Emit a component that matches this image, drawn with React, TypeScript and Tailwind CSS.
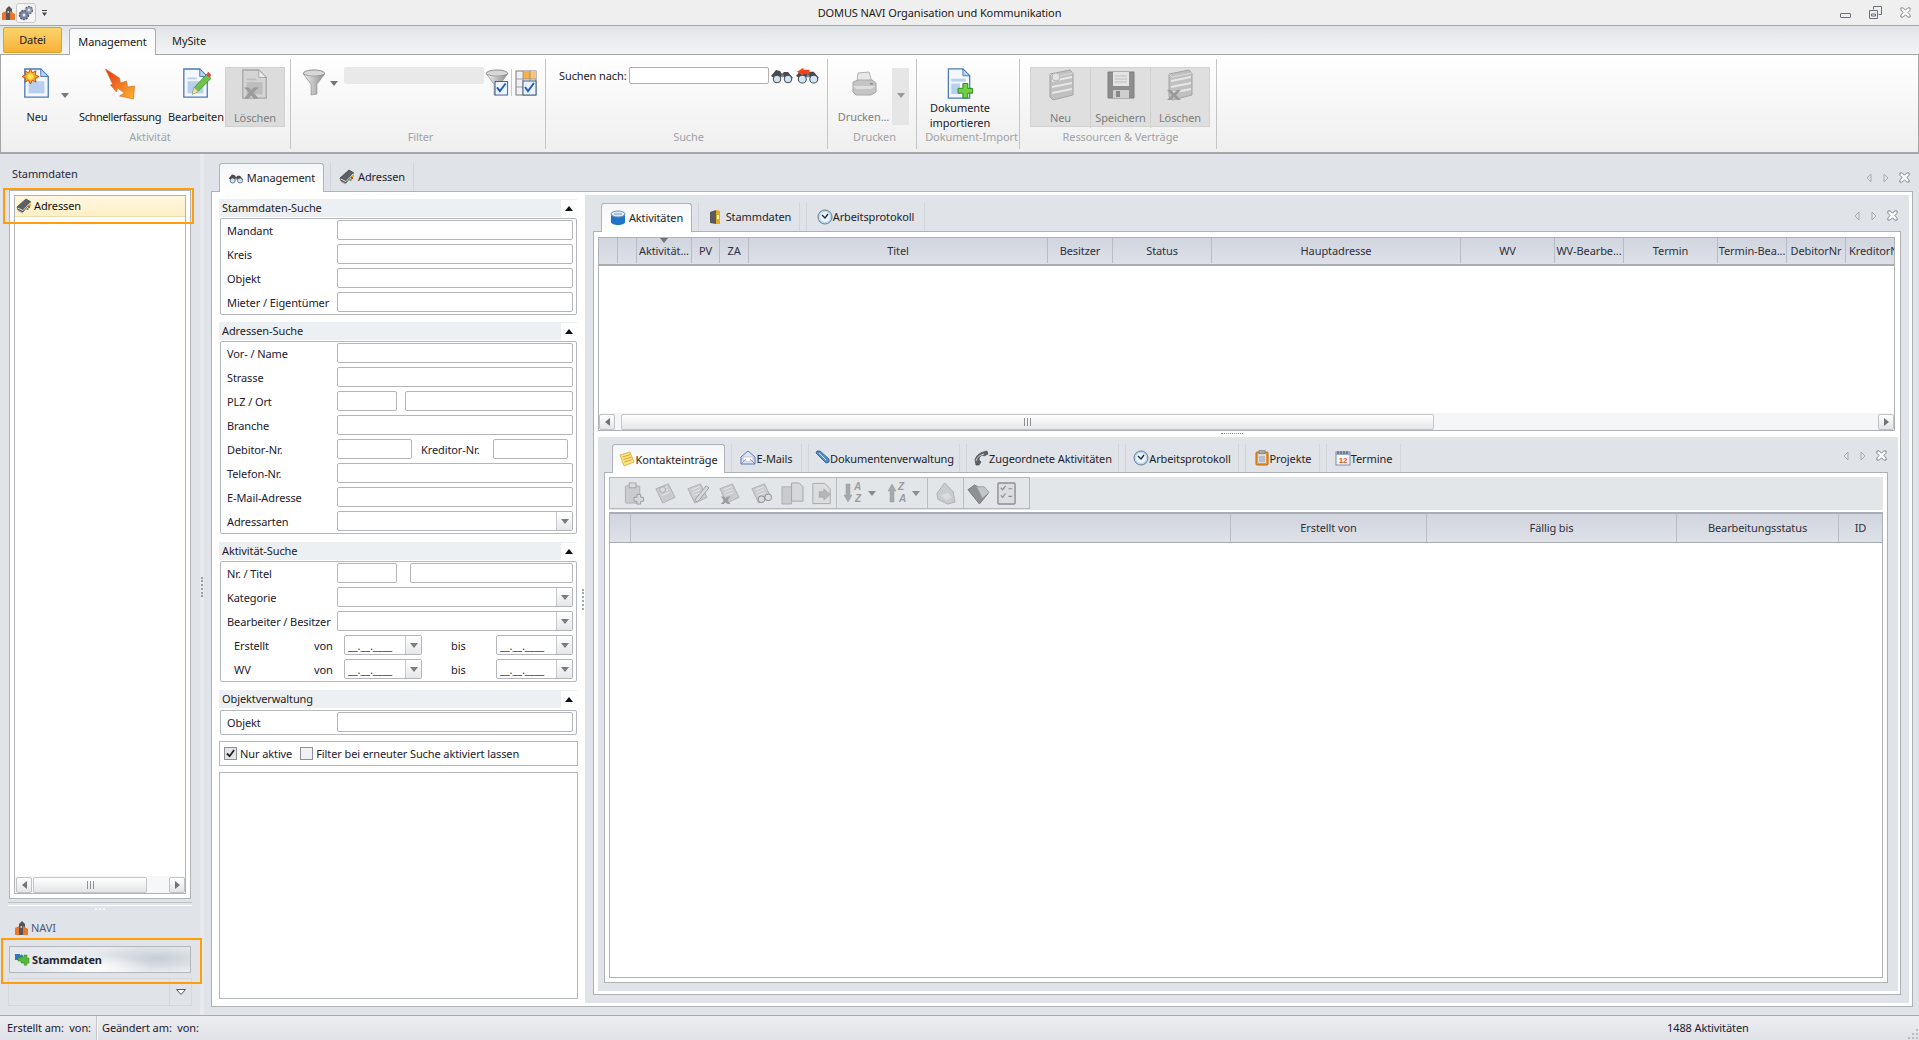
import type { ReactNode } from "react";

const line = "border-[#b4b7bc]";

type IconProps = { className?: string };

const Tri = ({ className = "" }: IconProps) => (
  <svg viewBox="0 0 8 5" className={`w-[8px] h-[5px] ${className}`}>
    <path d="M0 0h8L4 5z" fill="currentColor" />
  </svg>
);

/* ---- large ribbon icons ---- */
const DocBase = ({ gray = false }: { gray?: boolean }) => (
  <>
    <path d="M3 1h17l8 8v22H3z" fill={gray ? "#d4d4d4" : "#f4f8fd"} stroke={gray ? "#a8a8a8" : "#4a7ab8"} strokeWidth="1.4" />
    <path d="M20 1v8h8z" fill={gray ? "#ececec" : "#bcd4f0"} stroke={gray ? "#a8a8a8" : "#4a7ab8"} />
    <rect x="7" y="14" width="17" height="13" fill={gray ? "#bdbdbd" : "#b9cfee"} />
    <rect x="7" y="10" width="10" height="2" fill={gray ? "#bdbdbd" : "#b9cfee"} />
  </>
);

const NewDoc = () => (
  <svg viewBox="0 0 32 34" className="w-[30px] h-[32px]">
    <DocBase />
    <path d="M9 1l2 4 4-2-1 4 4 2-4 2 1 4-4-2-2 4-2-4-4 2 1-4-4-2 4-2-1-4 4 2z" fill="#f0b020" stroke="#d8401a" strokeWidth="1" />
    <circle cx="9" cy="9" r="3.2" fill="#ffe14d" />
  </svg>
);

const Lightning = () => (
  <svg viewBox="0 0 34 34" className="w-[35px] h-[34px]">
    <defs>
      <linearGradient id="bolt" x1="0" y1="0" x2="1" y2="1">
        <stop offset="0" stopColor="#e5341a" />
        <stop offset="1" stopColor="#ffb52e" />
      </linearGradient>
    </defs>
    <path d="M2 2l14 9 1 5 6-2 1 6 7-1-1 13-14-3 5-3-7-5-1 4-6-7 2-1z" fill="url(#bolt)" stroke="#c9661a" strokeWidth=".6" />
  </svg>
);

const EditDoc = () => (
  <svg viewBox="0 0 32 34" className="w-[30px] h-[32px]">
    <DocBase />
    <path d="M12 28l2-7 13-14 5 4-14 14z" fill="#6fc24a" stroke="#3d8a2a" strokeWidth=".8" />
    <path d="M27 7l2-3 3 3-1 3z" fill="#e2483a" />
    <path d="M12 28l2-7 4 4z" fill="#f7dca8" />
  </svg>
);

const DeleteDoc = () => (
  <svg viewBox="0 0 32 34" className="w-[30px] h-[32px]">
    <DocBase gray />
    <path d="M5 20l4 0 3 3 3-3 4 0-5 5 5 6-4 0-3-3-3 3-4 0 5-6z" fill="#9c9c9c" stroke="#8a8a8a" strokeWidth=".5" />
  </svg>
);

const Funnel = ({ check = false }: { check?: boolean }) => (
  <svg viewBox="0 0 24 28" className="w-[24px] h-[27px]">
    <defs>
      <linearGradient id="fun" x1="0" x2="1" y1="0" y2="0">
        <stop offset="0" stopColor="#f2f2f2" />
        <stop offset="1" stopColor="#8c8c8c" />
      </linearGradient>
    </defs>
    <ellipse cx="12" cy="4.5" rx="11" ry="3.5" fill="#d8d8d8" stroke="#8a8a8a" />
    <path d="M1 5l8 11v11l6-1V16l8-11c-3 3-19 3-22 0z" fill="url(#fun)" stroke="#8a8a8a" strokeWidth=".7" />
    {check && (
      <>
        <rect x="10" y="13" width="13" height="14" fill="#eef3fb" stroke="#3c5f95" />
        <path d="M12 19l3 4 6-8" fill="none" stroke="#1f5fb8" strokeWidth="2" />
      </>
    )}
  </svg>
);

const GridCheck = () => (
  <svg viewBox="0 0 22 26" className="w-[22px] h-[26px]">
    <rect x="1" y="1" width="20" height="24" fill="#f1f1f1" stroke="#7a7a7a" />
    <rect x="8" y="1" width="7" height="8" fill="#f6b24a" />
    <rect x="15" y="1" width="6" height="8" fill="#f6c77a" />
    <path d="M1 9h20M1 17h20M8 1v24M15 1v24" stroke="#8a8a8a" strokeWidth=".8" />
    <rect x="8" y="11" width="13" height="14" fill="#eef3fb" stroke="#3c5f95" />
    <path d="M10 17l3 4 6-8" fill="none" stroke="#1f5fb8" strokeWidth="2" />
  </svg>
);

const Binoculars = ({ arrow = false, className = "w-[24px] h-[16px]" }: { arrow?: boolean; className?: string }) => (
  <svg viewBox="0 0 24 16" className={className}>
    <path d="M1 8l5-6 4 1 2 3 2-2 4 0 5 6-6 2-3-3h-4l-3 3z" fill="#4a4a4c" />
    <circle cx="7" cy="11" r="3.800" fill="#cfe6fa" stroke="#44464a" strokeWidth="1" />
    <circle cx="18" cy="11" r="3.800" fill="#cfe6fa" stroke="#44464a" strokeWidth="1" />
    <circle cx="12.500" cy="8" r="1.400" fill="#8a8c90" />
    {arrow && <path d="M2 4l6-4v2h6v4H8v2z" fill="#f0451c" />}
  </svg>
);

const Printer = () => (
  <svg viewBox="0 0 26 26" className="w-[26px] h-[26px]">
    <path d="M7 2l11-1 3 10H6z" fill="#e8e8e8" stroke="#b0b0b0" />
    <path d="M2 11l5-2h14l4 3v9l-5 3H5l-3-3z" fill="#c4c4c4" stroke="#a8a8a8" />
    <path d="M2 15h23l-5 3H5z" fill="#dedede" />
    <rect x="19" y="12" width="3" height="1.5" fill="#8c8c8c" />
  </svg>
);

const ImportDoc = () => (
  <svg viewBox="0 0 28 32" className="w-[28px] h-[31px]">
    <path d="M2 1h15l7 7v23H2z" fill="#f4f8fd" stroke="#4a7ab8" strokeWidth="1.3" />
    <path d="M17 1v7h7z" fill="#bcd4f0" stroke="#4a7ab8" />
    <rect x="5" y="11" width="15" height="3" fill="#b9cfee" />
    <rect x="5" y="16" width="9" height="11" fill="#b9cfee" />
    <path d="M17 16h5v5h5v5h-5v5h-5v-5h-5v-5h5z" fill="#6fd243" stroke="#2f8a1c" />
  </svg>
);

const ServerBase = () => (
  <>
    <path d="M3 5l20-4 3 3v22l-20 5-3-3z" fill="#c0c0c0" stroke="#a4a4a4" />
    <path d="M5 12l20-4M5 18l20-4M5 24l20-4" stroke="#e8e8e8" strokeWidth="2" />
    <path d="M3 5l3 3 20-4" fill="none" stroke="#dadada" />
  </>
);

const ServerNew = () => (
  <svg viewBox="0 0 28 32" className="w-[28px] h-[32px]">
    <ServerBase />
    <circle cx="9" cy="8" r="4" fill="#e2e2e2" stroke="#b8b8b8" />
  </svg>
);

const ServerDel = () => (
  <svg viewBox="0 0 28 32" className="w-[28px] h-[32px]">
    <ServerBase />
    <path d="M1 21h4l3 3 3-3h4l-5 5 5 5h-4l-3-3-3 3H1l5-5z" fill="#9a9a9a" />
  </svg>
);

const Floppy = () => (
  <svg viewBox="0 0 28 30" className="w-[28px] h-[30px]">
    <path d="M1 2h26v26H1z" fill="#8e8e8e" stroke="#7d7d7d" />
    <rect x="6" y="2" width="16" height="14" fill="#e4e4e4" />
    <path d="M8 6h12M8 9h12M8 12h12" stroke="#bdbdbd" />
    <rect x="6" y="20" width="16" height="8" fill="#cfcfcf" />
    <rect x="9" y="21" width="4" height="6" fill="#888" />
  </svg>
);

/* ---- small tab icons ---- */
const BookIcon = ({ className = "w-[16px] h-[16px]" }: IconProps) => (
  <svg viewBox="0 0 16 16" className={className}>
    <path d="M1 9l9-8 5 3-8 10-5-2z" fill="#5d5f63" stroke="#36383c" strokeWidth=".7" />
    <path d="M1.500 10l5.500 2.500 7.500-8" fill="none" stroke="#e0e0e0" strokeWidth="1" />
    <path d="M2 12.500l5 2.500" stroke="#9a9a9a" />
    <rect x="13" y="6" width="2" height="2" fill="#e2b21f" />
    <rect x="12" y="8" width="2" height="2" fill="#d84a2a" />
    <rect x="10.500" y="10" width="2" height="2" fill="#4aa83a" />
  </svg>
);

const DbIcon = () => (
  <svg viewBox="0 0 16 16" className="w-[16px] h-[16px]">
    <path d="M1 4v8c0 4 14 4 14 0V4z" fill="#1f73c8" />
    <ellipse cx="8" cy="4" rx="7" ry="3" fill="#dfe9f4" stroke="#6f93bb" />
    <path d="M4 4h8" stroke="#9cb6d2" strokeWidth="1.5" />
  </svg>
);

const BinderIcon = () => (
  <svg viewBox="0 0 16 16" className="w-[16px] h-[16px]">
    <path d="M3 3l6-2v14l-6-1z" fill="#5a5a5a" />
    <path d="M9 1l4 1v13l-4 0z" fill="#e6a91e" />
    <rect x="10" y="6" width="2" height="4" fill="#fff3c2" />
  </svg>
);

const ClockIcon = () => (
  <svg viewBox="0 0 16 16" className="w-[16px] h-[16px]">
    <circle cx="8" cy="8" r="7" fill="#bcd9f2" stroke="#6c7f92" />
    <circle cx="8" cy="8" r="5" fill="#edf5fc" />
    <path d="M5 6l3 3 3-4" fill="none" stroke="#1a2a4a" strokeWidth="1.3" />
  </svg>
);

const NoteIcon = () => (
  <svg viewBox="0 0 16 16" className="w-[16px] h-[16px]">
    <path d="M1 4l10-3 4 10-10 4z" fill="#fbe27a" stroke="#c9a83a" strokeWidth=".7" />
    <path d="M3.500 6l8-2.500M4.500 8.500l8-2.500M5.500 11l7-2.300" stroke="#bb9a2e" strokeWidth=".7" />
  </svg>
);

const MailIcon = () => (
  <svg viewBox="0 0 16 16" className="w-[16px] h-[16px]">
    <path d="M1 7l7-6 7 6v7H1z" fill="#dbe6f6" stroke="#5c78a8" />
    <path d="M3 7h10v3l-5 2-5-2z" fill="#fff" stroke="#c89aa8" strokeWidth=".6" />
    <path d="M1 14l5-5M15 14l-5-5" stroke="#5c78a8" strokeWidth=".7" />
  </svg>
);

const ClipIcon = () => (
  <svg viewBox="0 0 16 16" className="w-[16px] h-[16px]">
    <path d="M2 3l10 10 3-1 0-3L6 1 3 1z" fill="#4f8ed0" stroke="#24548f" strokeWidth=".8" />
    <path d="M5 3l7 7" stroke="#cfe2f6" strokeWidth="1" />
  </svg>
);

const PhoneIcon = () => (
  <svg viewBox="0 0 16 16" className="w-[16px] h-[16px]">
    <path d="M2 10C3 5 8 2 14 1l1 3-4 2-2-1c-2 1-3 3-3 5l2 2-2 3H3z" fill="#5f6266" stroke="#3a3c40" strokeWidth=".6" />
    <path d="M3 11c1-4 4-6 8-7" fill="none" stroke="#d0d0d0" />
  </svg>
);

const ClipboardIcon = () => (
  <svg viewBox="0 0 16 16" className="w-[16px] h-[16px]">
    <rect x="2" y="2" width="12" height="13" rx="1" fill="#f0962a" stroke="#b8661a" />
    <rect x="4" y="4" width="8" height="9" fill="#d8dde6" />
    <rect x="5" y="0.500" width="6" height="3" fill="#a8a8a8" stroke="#6f6f6f" strokeWidth=".5" />
    <path d="M5 7h6M5 9h6M5 11h6" stroke="#7c8592" strokeWidth=".7" />
  </svg>
);

const CalendarIcon = () => (
  <svg viewBox="0 0 16 16" className="w-[16px] h-[16px]">
    <rect x="1" y="2" width="14" height="13" fill="#f7f7f7" stroke="#7c8aa8" />
    <rect x="1" y="2" width="14" height="3" fill="#9aa6c2" />
    <path d="M3 1v3M6 1v3M9 1v3M12 1v3" stroke="#555" />
    <text x="8" y="13" textAnchor="middle" fontSize="8" fontWeight="700" fill="#e8541c" fontFamily="Liberation Sans, sans-serif">12</text>
  </svg>
);

const NaviIcon = ({ className = "w-[16px] h-[16px]" }: IconProps) => (
  <svg viewBox="0 0 16 16" className={className}>
    <path d="M5 15V4l3-3 3 3v11z" fill="#55555a" />
    <path d="M1 15V8l4-2v9z" fill="#e9762a" />
    <path d="M9 15V6l5 3v6z" fill="#e9762a" />
    <rect x="6.500" y="6" width="1.500" height="2" fill="#c8c8c8" />
  </svg>
);

const PuzzleIcon = () => (
  <svg viewBox="0 0 16 16" className="w-[16px] h-[16px]">
    <path d="M1 2h5v2a1.500 1.500 0 013 0v1H6v3H1z" fill="#2f78c4" />
    <path d="M6 5h4V3h3v3h2v5h-2v1a1.500 1.500 0 01-3 0v-1H7V9H4V6h2z" fill="#55b83a" stroke="#2f8a1c" strokeWidth=".5" />
  </svg>
);

const GearsIcon = () => (
  <svg viewBox="0 0 16 16" className="w-[16px] h-[16px]">
    <circle cx="6" cy="10" r="4.500" fill="#7d84a0" stroke="#50566e" strokeDasharray="2 1" strokeWidth="1.500" />
    <circle cx="11" cy="5" r="3.500" fill="#9aa0ba" stroke="#60667e" strokeDasharray="2 1" strokeWidth="1.300" />
    <circle cx="6" cy="10" r="1.500" fill="#e8e8ee" />
    <circle cx="11" cy="5" r="1.200" fill="#e8e8ee" />
  </svg>
);

const CloseX = ({ className = "text-[#7a7f88]" }: IconProps) => (
  <svg viewBox="0 0 12 12" className={`w-[11px] h-[11px] ${className}`}>
    <path d="M1 1h2.500L6 3.500 8.500 1H11v2.500L8.500 6 11 8.500V11H8.500L6 8.500 3.500 11H1V8.500L3.500 6 1 3.500z" fill="#fff" stroke="currentColor" strokeWidth="1" />
  </svg>
);

const NavArrows = ({ className }: IconProps) => (
  <div className={`flex items-center gap-[8px] ${className}`}>
    <svg viewBox="0 0 6 10" className="w-[6px] h-[10px] mr-[3px]"><path d="M5 1L1 5l4 4z" fill="none" stroke="#a8adb5" /></svg>
    <svg viewBox="0 0 6 10" className="w-[6px] h-[10px] mr-[2px]"><path d="M1 1l4 4-4 4z" fill="none" stroke="#a8adb5" /></svg>
    <CloseX />
  </div>
);

/* ---- gray toolbar icons ---- */
const g = { fill: "#c9cbce", stroke: "#a4a6aa", strokeWidth: 0.8 };

const GrayPage = ({ children }: { children?: ReactNode }) => (
  <svg viewBox="0 0 24 24" className="w-[23px] h-[23px] shrink-0">
    <path d="M2 7l13-5 7 14-13 6z" {...g} />
    <path d="M6 8l8-3M7 11l8-3M8 14l8-3" stroke="#e6e7e9" />
    {children}
  </svg>
);

const ToolbarIcons = () => (
  <div className="flex items-center h-full pl-[13px]">
    <svg viewBox="0 0 22 24" className="w-[22px] h-[23px] shrink-0">
      <rect x="2" y="4" width="15" height="18" rx="1" {...g} />
      <rect x="6" y="1" width="7" height="5" fill="#dcdcdc" stroke="#a4a6aa" />
      <path d="M14 13h4v3h3v4h-3v3h-4v-3h-3v-4h3z" fill="#d8d9db" stroke="#9a9c9f" />
    </svg>
    <div className="flex gap-[9px] ml-[9px] items-center">
      <GrayPage><circle cx="9" cy="8" r="3" fill="#dcdcdc" stroke="#a4a6aa" /></GrayPage>
      <GrayPage><path d="M9 19L21 4l3 2-12 15z" fill="#d8d9db" stroke="#9a9c9f" /></GrayPage>
      <GrayPage><path d="M3 15h3l2 2 2-2h3l-3 4 3 4h-3l-2-2-2 2H3l3-4z" fill="#9a9c9f" /></GrayPage>
      <GrayPage><circle cx="12" cy="18" r="3.500" fill="#dcdcdc" stroke="#8a8c8f" /><circle cx="19" cy="16" r="3.500" fill="#dcdcdc" stroke="#8a8c8f" /></GrayPage>
    </div>
    <svg viewBox="0 0 24 24" className="w-[23px] h-[23px] ml-[8px] shrink-0">
      <path d="M1 5h10v18H1z" {...g} />
      <path d="M11 1h8l4 4v15H11z" fill="#d6d7d9" stroke="#a4a6aa" />
    </svg>
    <svg viewBox="0 0 24 24" className="w-[22px] h-[23px] ml-[7px] shrink-0">
      <path d="M2 1h13l6 6v16H2z" fill="#dcdddf" stroke="#a4a6aa" />
      <path d="M9 10h5V7l7 6-7 6v-3H9z" fill="#b4b6b9" stroke="#96989b" strokeWidth=".6" />
    </svg>
    <div className="w-px h-full bg-[#b9bcc1] ml-[3px]" />
    <SortBtn first="A" second="Z" up={false} className="ml-[6px]" />
    <SortBtn first="Z" second="A" up className="ml-[11px]" />
    <div className="w-px h-full bg-[#b9bcc1] ml-[7px]" />
    <svg viewBox="0 0 24 24" className="w-[23px] h-[23px] ml-[6px] shrink-0">
      <path d="M3 12l8-11 9 9 2 11-8 2-10-5z" {...g} />
      <path d="M7 14l7-3 5 5-6 3z" fill="#dadbdd" />
    </svg>
    <div className="w-px h-full bg-[#b9bcc1] ml-[6px]" />
    <svg viewBox="0 0 24 24" className="w-[23px] h-[23px] ml-[3px] shrink-0">
      <path d="M1 8l7-5 14 9-9 11z" fill="#8e9094" stroke="#77797c" />
      <path d="M10 5h8l5 6-7 6z" fill="#c4c6c9" stroke="#9a9c9f" />
    </svg>
    <svg viewBox="0 0 20 24" className="w-[19px] h-[23px] ml-[7px] shrink-0">
      <rect x="1" y="1" width="18" height="22" rx="1" fill="#dcdddf" stroke="#8e9094" strokeWidth="1.500" />
      <path d="M4 6l2 2 3-4M4 14l2 2 3-4M12 7h4M12 15h4" fill="none" stroke="#8e9094" strokeWidth="1.300" />
    </svg>
  </div>
);

const SortBtn = ({ first, second, up, className = "" }: { first: string; second: string; up: boolean; className?: string }) => (
  <div className={`flex items-center shrink-0 ${className}`}>
    <svg viewBox="0 0 10 20" className="w-[10px] h-[20px]">
      <path d={up ? "M5 1l4 7H7v11H3V8H1z" : "M3 1h4v11h2l-4 7-4-7h2z"} fill="#a6a8ab" stroke="#96989b" strokeWidth=".5" />
    </svg>
    <div className="flex flex-col text-[10px] leading-[12px] font-bold italic text-[#9a9c9f] ml-[1px] w-[10px] [font-family:'Liberation_Sans',sans-serif]">
      <span>{first}</span>
      <span className="ml-[1px]">{second}</span>
    </div>
    <Tri className="text-[#8a8c90] ml-[4px]" />
  </div>
);

/* ---- ribbon ---- */
const LargeBtn = ({ icon, label, className = "", labelClass = "", disabled = false }: { icon: ReactNode; label: string; className?: string; labelClass?: string; disabled?: boolean }) => (
  <div className={`flex flex-col items-center h-[60px] pt-[1px] shrink-0 ${className}`}>
    <div className="h-[32px] flex items-center justify-center">{icon}</div>
    <span className={`mt-[9px] h-[16px] leading-[16px] whitespace-nowrap ${disabled ? "text-[#7d7d7d]" : ""} ${labelClass}`}>{label}</span>
  </div>
);

const RibbonGroup = ({ label, className, labelClass = "pl-[5px]", children }: { label: string; className: string; labelClass?: string; children: ReactNode }) => (
  <div className={`h-[90px] border-r border-[#c4c5c7] flex flex-col shrink-0 ${className}`}>
    <div className="h-[70px] pt-[8px] flex items-start">{children}</div>
    <div className={`h-[16px] leading-[16px] text-center text-[#a0a2a6] whitespace-nowrap ${labelClass}`}>{label}</div>
  </div>
);

const TitleBar = () => (
  <div className="h-[26px] shrink-0 border-b border-[#a6a6a6] bg-[#efefef] flex items-center relative">
    <NaviIcon className="w-[16px] h-[16px] ml-[1px]" />
    <div className="w-[20px] h-[20px] ml-[-1px] flex items-center justify-center border border-[#c8c8c8] rounded-[3px] bg-[#f6f6f6]">
      <GearsIcon />
    </div>
    <svg viewBox="0 0 6 7" className="w-[5px] h-[6px] ml-[6px]"><path d="M0 0h6v1H0zM0 3h6L3 7z" fill="#444" /></svg>
    <div className="flex-1 text-center pr-[8px] text-[#1a1a1a] whitespace-nowrap">DOMUS NAVI Organisation und Kommunikation</div>
    <div className="flex items-center gap-[18px] pr-[8px]">
      <div className="w-[11px] h-[5px] border border-[#6a6f7a] rounded-[1px] mt-[5px]" />
      <svg viewBox="0 0 13 13" className="w-[13px] h-[13px]">
        <path d="M4.500 3.500v-3h8v8h-3M.5 4.500h8v8h-8z" fill="none" stroke="#6a6f7a" />
        <path d="M2.500 8h4v2h-4z" fill="none" stroke="#6a6f7a" />
      </svg>
      <CloseX />
    </div>
  </div>
);

const RibbonTabs = () => (
  <div className="h-[28px] shrink-0 bg-gradient-to-b from-[#e1e4e7] to-[#f3f4f6] flex items-start relative z-10">
    <div className="ml-[3px] mt-[1px] w-[59px] h-[26px] rounded-[2px] border border-[#e0a02a] bg-gradient-to-b from-[#fbd46a] to-[#f6b236] flex items-center justify-center text-[#202020]">Datei</div>
    <div className="ml-[7px] mt-[2px] w-[87px] h-[27px] bg-gradient-to-b from-[#f7f8f9] to-white border border-b-0 border-[#a9acb0] rounded-t-[3px] flex items-center justify-center">Management</div>
    <div className="ml-[16px] h-[28px] flex items-center pt-[2px]">MySite</div>
  </div>
);

const Ribbon = () => (
  <div className="h-[100px] shrink-0 border border-[#a6a6a6] border-b-2 bg-gradient-to-b from-white to-[#efefef] flex pt-[4px] pl-[2px]">
    <RibbonGroup label="Aktivität" labelClass="pl-[7px]" className="w-[288px]">
      <LargeBtn icon={<NewDoc />} label="Neu" className="w-[46px] ml-[11px]" />
      <div className="w-[19px] h-[32px] flex items-end pl-[1px] pb-[1px] shrink-0">
        <Tri className="text-[#777]" />
      </div>
      <LargeBtn icon={<Lightning />} label="Schnellerfassung" labelClass="tracking-[-0.4px]" className="w-[82px]" />
      <LargeBtn icon={<EditDoc />} label="Bearbeiten" className="w-[56px] ml-[7px]" />
      <LargeBtn icon={<DeleteDoc />} label="Löschen" disabled className="w-[60px] ml-[1px] bg-[#dcdcdc] border border-[#d0d0d0]" />
    </RibbonGroup>
    <RibbonGroup label="Filter" className="w-[255px]">
      <div className="flex items-start pl-[11px]">
        <div className="mt-[2px] shrink-0"><Funnel /></div>
        <Tri className="text-[#777] mt-[14px] ml-[4px]" />
        <div className="w-[140px] h-[17px] bg-[#e9e9e9] rounded-[2px] ml-[6px]" />
        <div className="mt-[2px] ml-[1px] shrink-0"><Funnel check /></div>
        <div className="w-px h-[27px] bg-[#c9c9c9] ml-[2px] mt-[2px]" />
        <div className="ml-[3px] mt-[3px] shrink-0"><GridCheck /></div>
      </div>
    </RibbonGroup>
    <RibbonGroup label="Suche" labelClass="pl-[4px]" className="w-[282px]">
      <div className="flex items-center pl-[13px] h-[17px]">
        <span className="w-[70px] whitespace-nowrap">Suchen nach:</span>
        <input readOnly className="w-[140px] h-[17px] bg-white border border-[#b0b0b0] rounded-[2px]" />
        <Binoculars className="w-[24px] h-[16px] ml-[1px]" />
        <Binoculars arrow className="w-[25px] h-[18px] ml-[1px]" />
      </div>
    </RibbonGroup>
    <RibbonGroup label="Drucken" className="w-[89px]">
      <LargeBtn icon={<Printer />} label="Drucken..." disabled className="w-[57px] ml-[7px]" />
      <div className="w-[17px] h-[57px] bg-[#e6e6e6] flex items-center justify-center shrink-0 mt-[1px]">
        <Tri className="text-[#999] mb-[2px]" />
      </div>
    </RibbonGroup>
    <RibbonGroup label="Dokument-Import" labelClass="pl-[7px]" className="w-[103px]">
      <div className="flex flex-col items-center w-[86px] pt-[1px] shrink-0">
        <ImportDoc />
        <span className="leading-[15px] mt-[1px] text-center text-[#1a1a2a]">Dokumente<br />importieren</span>
      </div>
    </RibbonGroup>
    <RibbonGroup label="Ressourcen & Verträge" className="w-[197px]">
      <div className="ml-[10px] flex bg-[#dfdfdf] border border-[#d2d2d2] h-[60px] shrink-0">
        <LargeBtn icon={<ServerNew />} label="Neu" disabled className="w-[60px] border-r border-[#d0d0d0]" />
        <LargeBtn icon={<Floppy />} label="Speichern" disabled className="w-[60px] border-r border-[#d0d0d0]" />
        <LargeBtn icon={<ServerDel />} label="Löschen" disabled className="w-[58px]" />
      </div>
    </RibbonGroup>
  </div>
);

/* ---- left column ---- */
const ScrollBtn = ({ dir }: { dir: "left" | "right" }) => (
  <div className="w-[16px] h-[16px] shrink-0 border border-[#c0c2c6] rounded-[2px] bg-gradient-to-b from-white to-[#e3e4e6] flex items-center justify-center">
    <svg viewBox="0 0 5 8" className="w-[5px] h-[8px]"><path d={dir === "left" ? "M5 0v8L0 4z" : "M0 0v8l5-4z"} fill="#6f7278" /></svg>
  </div>
);

const Grip = () => (
  <svg viewBox="0 0 7 8" className="w-[7px] h-[8px]"><path d="M.5 0v8M3.500 0v8M6.500 0v8" stroke="#8f9297" /></svg>
);

const LeftPanel = () => (
  <div className="w-[200px] shrink-0 flex flex-col">
    <div className="mt-[12px] ml-[12px] h-[16px] leading-[16px] text-[#2a2a3a]">Stammdaten</div>
    <div className="ml-[9px] w-[182px] mt-[8px] h-[709px] border border-[#b0b3b8] bg-white p-[4px] flex">
      <div className="flex-1 border border-[#b0b3b8] flex flex-col">
        <div className="h-[21px] flex items-center bg-gradient-to-b from-[#fff7e0] to-[#ffefc4] border-b border-[#e8dcae] pl-[1px]">
          <BookIcon />
          <span className="ml-[2px] text-[#111]">Adressen</span>
        </div>
        <div className="flex-1" />
        <div className="h-[17px] flex items-center bg-[#f6f7f8] pl-[1px]">
          <ScrollBtn dir="left" />
          <div className="w-[114px] ml-[1px] h-[16px] border border-[#c4c6ca] rounded-[2px] bg-gradient-to-b from-white to-[#e3e4e6] flex items-center justify-center"><Grip /></div>
          <div className="flex-1" />
          <ScrollBtn dir="right" />
        </div>
      </div>
    </div>
    <div className="ml-[8px] w-[184px] mt-[3px] border-t border-[#bcbfc4] pt-[2px]">
      <div className="border-t border-white flex justify-center pt-[2px] gap-[2px]">
        <i className="block w-[2px] h-[2px] bg-[#f4f5f6]" />
        <i className="block w-[2px] h-[2px] bg-[#f4f5f6]" />
        <i className="block w-[2px] h-[2px] bg-[#f4f5f6]" />
      </div>
    </div>
    <div className="ml-[14px] mt-[9px] h-[18px] flex items-center text-[#4a5a78]">
      <NaviIcon />
      <span className="ml-[1px]">NAVI</span>
    </div>
    <div className="ml-[9px] w-[182px] mt-[9px] h-[27px] border border-[#b4b7bc] bg-[radial-gradient(ellipse_60px_14px_at_45%_85%,#ffffff,transparent),radial-gradient(ellipse_70px_16px_at_82%_45%,#c6cdd5,transparent),linear-gradient(90deg,#e4e7eb,#eef0f3)] flex items-center pl-[4px]">
      <PuzzleIcon />
      <span className="ml-[2px] font-bold text-[#26262e]">Stammdaten</span>
    </div>
    <div className="ml-[8px] w-[184px] mt-[5px] h-[28px] border border-[#d5d8dc] flex justify-end">
      <div className="w-[22px] border-l border-[#d5d8dc] flex items-center justify-center">
        <svg viewBox="0 0 10 6" className="w-[10px] h-[6px]"><path d="M.5.5h9L5 5.500z" fill="#fff" stroke="#55585e" /></svg>
      </div>
    </div>
  </div>
);

/* ---- search form ---- */
const Section = ({ title, children, gap = "mb-px", className = "" }: { title: string; children: ReactNode; gap?: string; className?: string }) => (
  <div className={className}>
    <div className={`h-[18px] w-[358px] bg-[#edf0f3] flex items-center justify-between pl-[3px] ${gap}`}>
      <span className="text-[#1c1c24]">{title}</span>
      <div className="w-[16px] h-[17px] bg-white flex items-center justify-center"><Tri className="rotate-180 text-[#111]" /></div>
    </div>
    <div className={`ml-px w-[357px] border ${line} rounded-[2px] pl-[6px] pr-[3px] pt-px pb-[2px] flex flex-col gap-[4px]`}>
      {children}
    </div>
  </div>
);

const Field = ({ className = "w-[236px]" }: { className?: string }) => (
  <input readOnly className={`h-[20px] bg-white border border-[#b4b5b8] rounded-[2px] shrink-0 ${className}`} />
);

const Combo = ({ className = "w-[236px]", text }: { className?: string; text?: string }) => (
  <div className={`h-[20px] bg-white border border-[#b4b5b8] rounded-[2px] shrink-0 flex ${className}`}>
    <div className="flex-1 pl-[3px] leading-[19px] text-[#333] overflow-hidden whitespace-nowrap">{text}</div>
    <div className="w-[16px] border-l border-[#c8c9cc] bg-gradient-to-b from-white to-[#e6e7e9] flex items-center justify-center">
      <Tri className="text-[#7a7c80]" />
    </div>
  </div>
);

const Row = ({ label, children }: { label: string; children: ReactNode }) => (
  <div className="flex items-center h-[20px]">
    <span className="w-[110px] shrink-0 pt-px whitespace-nowrap text-[#23202e]">{label}</span>
    {children}
  </div>
);

const DateRow = ({ label }: { label: string }) => (
  <div className="flex items-center h-[20px] text-[#23202e]">
    <span className="w-[80px] ml-[7px] pt-px">{label}</span>
    <span className="w-[30px] pt-px">von</span>
    <Combo className="w-[78px]" text="__.__.____" />
    <span className="ml-[29px] w-[45px] pt-px">bis</span>
    <Combo className="w-[77px]" text="__.__.____" />
  </div>
);

const SearchForm = () => (
  <div className="w-[373px] shrink-0 bg-white pl-[7px] pr-[6px] pt-[4px] pb-[4px] flex flex-col">
    <Section title="Stammdaten-Suche">
      <Row label="Mandant"><Field /></Row>
      <Row label="Kreis"><Field /></Row>
      <Row label="Objekt"><Field /></Row>
      <Row label="Mieter / Eigentümer"><Field /></Row>
    </Section>
    <Section title="Adressen-Suche" className="mt-[7px]">
      <Row label="Vor- / Name"><Field /></Row>
      <Row label="Strasse"><Field /></Row>
      <Row label="PLZ / Ort">
        <Field className="w-[60px]" />
        <Field className="w-[168px] ml-[8px]" />
      </Row>
      <Row label="Branche"><Field /></Row>
      <Row label="Debitor-Nr.">
        <Field className="w-[75px]" />
        <span className="ml-[9px] w-[72px] pt-px text-[#23202e]">Kreditor-Nr.</span>
        <Field className="w-[75px]" />
      </Row>
      <Row label="Telefon-Nr."><Field /></Row>
      <Row label="E-Mail-Adresse"><Field /></Row>
      <Row label="Adressarten"><Combo /></Row>
    </Section>
    <Section title="Aktivität-Suche" className="mt-[8px]">
      <Row label="Nr. / Titel">
        <Field className="w-[60px]" />
        <Field className="w-[163px] ml-[13px]" />
      </Row>
      <Row label="Kategorie"><Combo /></Row>
      <Row label="Bearbeiter / Besitzer"><Combo /></Row>
      <DateRow label="Erstellt" />
      <DateRow label="WV" />
    </Section>
    <Section title="Objektverwaltung" gap="mb-[2px]" className="mt-[8px]">
      <Row label="Objekt"><Field /></Row>
    </Section>
    <div className={`mt-[6px] h-[25px] w-[359px] border ${line} flex items-center pl-[4px] text-[#23202e]`}>
      <div className="w-[13px] h-[13px] border border-[#8f9196] bg-[#e4e5e8] flex items-center justify-center">
        <svg viewBox="0 0 10 10" className="w-[9px] h-[9px]"><path d="M1 5l3 3 5-7" fill="none" stroke="#222" strokeWidth="2" /></svg>
      </div>
      <span className="ml-[3px]">Nur aktive</span>
      <div className="w-[13px] h-[13px] border border-[#8f9196] bg-[#f1f2f4] ml-[8px]" />
      <span className="ml-[3px]">Filter bei erneuter Suche aktiviert lassen</span>
    </div>
    <div className={`mt-[6px] flex-1 w-[359px] border ${line}`} />
  </div>
);

/* ---- tabs and grids ---- */
const Tab = ({ label, icon, active = false, className, labelGap = "ml-[3px]" }: { label: string; icon: ReactNode; active?: boolean; className: string; labelGap?: string }) => (
  <div className={`shrink-0 flex items-center justify-center whitespace-nowrap ${active ? "h-[29px] bg-gradient-to-b from-[#f5f6f8] to-white border border-b-0 border-[#b0b3b8] rounded-t-[3px] relative z-10" : "h-[28px] border-x border-[#d2d5da]"} ${className}`}>
    {icon}
    <span className={`${labelGap} text-[#1e1e28]`}>{label}</span>
  </div>
);

const Cell = ({ label, className, children }: { label?: string; className: string; children?: ReactNode }) => (
  <div className={`h-full shrink-0 border-r border-[#b8bcc4] flex items-center justify-center overflow-hidden whitespace-nowrap relative text-[#30303a] ${className}`}>
    {label}
    {children}
  </div>
);

const headerBg = "bg-gradient-to-b from-[#d1d5df] to-[#dee1e7]";

const UpperGrid = () => (
  <div className="h-[194px] w-[1297px] border border-[#aeb1b6] flex flex-col shrink-0">
    <div className={`h-[28px] shrink-0 flex border-b-2 border-[#a9acb2] pb-px ${headerBg}`}>
      <Cell className="w-[19px]" />
      <Cell className="w-[19px]" />
      <Cell label="Aktivität..." className="w-[55px]">
        <Tri className="absolute top-0 left-[23px] text-[#6f7278]" />
      </Cell>
      <Cell label="PV" className="w-[28px]" />
      <Cell label="ZA" className="w-[29px]" />
      <Cell label="Titel" className="w-[299px]" />
      <Cell label="Besitzer" className="w-[65px]" />
      <Cell label="Status" className="w-[99px]" />
      <Cell label="Hauptadresse" className="w-[249px]" />
      <Cell label="WV" className="w-[94px]" />
      <Cell label="WV-Bearbe..." className="w-[69px]" />
      <Cell label="Termin" className="w-[94px]" />
      <Cell label="Termin-Bea..." className="w-[69px]" />
      <Cell label="DebitorNr" className="w-[59px]" />
      <Cell className="flex-1 justify-start pl-[3px] border-r-0" label="KreditorNr" />
    </div>
    <div className="flex-1 bg-white" />
    <div className="h-[17px] flex bg-[#f5f6f7] items-center">
      <ScrollBtn dir="left" />
      <div className="w-[813px] ml-[6px] h-[16px] border border-[#c4c6ca] rounded-[2px] bg-gradient-to-b from-white to-[#e5e6e8] flex items-center justify-center"><Grip /></div>
      <div className="flex-1" />
      <ScrollBtn dir="right" />
    </div>
  </div>
);

const LowerPane = () => (
  <div className="flex-1 mr-[2px] bg-[#e0e3e8] flex flex-col pl-[6px] pr-[10px] pb-[8px]">
    <div className="flex items-start justify-between h-[35px] shrink-0 pt-[7px]">
      <div className="flex gap-[6px] ml-[8px]">
        <Tab active icon={<NoteIcon />} label="Kontakteinträge" className="w-[113px]" labelGap="pt-px" />
        <Tab icon={<MailIcon />} label="E-Mails" className="w-[71px]" labelGap="pt-px" />
        <Tab icon={<ClipIcon />} label="Dokumentenverwaltung" className="w-[152px]" labelGap="pt-px" />
        <Tab icon={<PhoneIcon />} label="Zugeordnete Aktivitäten" className="w-[153px]" labelGap="pt-px" />
        <Tab icon={<ClockIcon />} label="Arbeitsprotokoll" className="w-[114px]" labelGap="pt-px" />
        <Tab icon={<ClipboardIcon />} label="Projekte" className="w-[75px]" labelGap="pt-px" />
        <Tab icon={<CalendarIcon />} label="Termine" className="w-[75px]" labelGap="pt-px" />
      </div>
      <NavArrows className="mt-[6px] mr-[1px]" />
    </div>
    <div className="flex-1 border border-[#aeb1b6] bg-white p-[4px] flex flex-col">
      <div className="h-[33px] shrink-0 bg-[#e3e6e9]">
        <div className="w-[421px] h-[32px] border border-[#b4b7bc]">
          <ToolbarIcons />
        </div>
      </div>
      <div className="flex-1 mt-[2px] flex flex-col border-x border-b border-[#aeb1b6]">
        <div className={`h-[31px] shrink-0 flex border-t-2 border-t-[#a9acb2] border-b border-b-[#a9acb2] ${headerBg}`}>
          <Cell className="w-[21px]" />
          <Cell className="w-[600px]" />
          <Cell label="Erstellt von" className="w-[196px]" />
          <Cell label="Fällig bis" className="w-[250px]" />
          <Cell label="Bearbeitungsstatus" className="w-[162px]" />
          <Cell label="ID" className="flex-1 border-r-0" />
        </div>
        <div className="flex-1 bg-white" />
      </div>
    </div>
  </div>
);

const ActivityPane = () => (
  <div className="flex-1 min-w-0 bg-[#e0e3e8] pl-[8px] pr-[8px] pt-[8px] pb-[8px] flex flex-col">
    <div className="flex items-start justify-between h-[28px] shrink-0">
      <div className="flex gap-[6px]">
        <Tab active icon={<DbIcon />} label="Aktivitäten" className="w-[91px] ml-[8px]" />
        <Tab icon={<BinderIcon />} label="Stammdaten" className="w-[102px]" />
        <Tab icon={<ClockIcon />} label="Arbeitsprotokoll" className="w-[119px]" labelGap="ml-0" />
      </div>
      <NavArrows className="mt-[7px] mr-[3px]" />
    </div>
    <div className="flex-1 min-h-0 border border-[#aeb1b6] bg-white pl-[4px] pt-[5px] pb-[3px] flex flex-col">
      <UpperGrid />
      <div className="h-[6px] shrink-0 flex justify-center pt-[2px] pr-[34px]">
        <div className="w-[22px] h-[2px] border-t border-dotted border-[#7f9a80]" />
      </div>
      <LowerPane />
    </div>
  </div>
);

const MainPanel = () => (
  <div className="flex-1 min-w-0 flex flex-col pl-[7px] pr-[6px] pt-[9px] pb-[8px] border-l-4 border-l-[#e8eaed]">
    <div className="flex items-start justify-between h-[28px] shrink-0">
      <div className="flex gap-[6px] ml-[8px]">
        <Tab active icon={<Binoculars className="w-[16px] h-[11px]" />} label="Management" className="w-[105px]" />
        <Tab icon={<BookIcon />} label="Adressen" className="w-[84px]" />
      </div>
      <NavArrows className="mt-[9px] mr-[3px]" />
    </div>
    <div className="flex-1 min-h-0 border border-[#aeb1b6] bg-white pt-[3px] pr-[3px] pb-[3px] flex">
      <SearchForm />
      <ActivityPane />
    </div>
  </div>
);

const StatusBar = () => (
  <div className="h-[25px] shrink-0 border-t border-[#a9a9a9] bg-gradient-to-b from-[#eceef1] to-[#dfe2e7] flex items-center text-[#22202c] relative">
    <span className="ml-[7px] w-[89px] whitespace-pre">Erstellt am:  von:</span>
    <div className="w-[2px] h-full bg-[#f6f7f8] border-l border-[#c4c6ca]" />
    <span className="ml-[4px] whitespace-pre">Geändert am:  von:</span>
    <span className="absolute left-[1667px]">1488 Aktivitäten</span>
    <svg viewBox="0 0 11 11" className="absolute right-[1px] bottom-[1px] w-[11px] h-[11px]">
      <path d="M9 1h2v2H9zM5 5h2v2H5zM9 5h2v2H9zM1 9h2v2H1zM5 9h2v2H5zM9 9h2v2H9z" fill="#b8bbc0" />
    </svg>
  </div>
);

export default function App() {
  return (
    <div className="w-[1919px] h-[1040px] relative overflow-hidden flex flex-col bg-[#e0e3e8] text-[11px] leading-[14px] tracking-[-0.1px] text-[#1a1a1a] [font-family:'Noto_Sans',sans-serif]">
      <TitleBar />
      <RibbonTabs />
      <Ribbon />
      <div className="flex-1 min-h-0 flex">
        <LeftPanel />
        <MainPanel />
      </div>
      <StatusBar />
      {/* orange marker frames and splitter grips drawn over the screenshot */}
      <div className="absolute left-[3px] top-[188px] w-[191px] h-[36px] border-2 border-[#ff9d0a] pointer-events-none" />
      <div className="absolute left-[1px] top-[938px] w-[201px] h-[46px] border-2 border-[#ff9d0a] pointer-events-none" />
      <div className="absolute left-[201px] top-[577px] h-[20px] border-l-2 border-dotted border-[#9aa0a6]" />
      <div className="absolute left-[582px] top-[589px] h-[21px] border-l-2 border-dotted border-[#9ab09c]" />
    </div>
  );
}
